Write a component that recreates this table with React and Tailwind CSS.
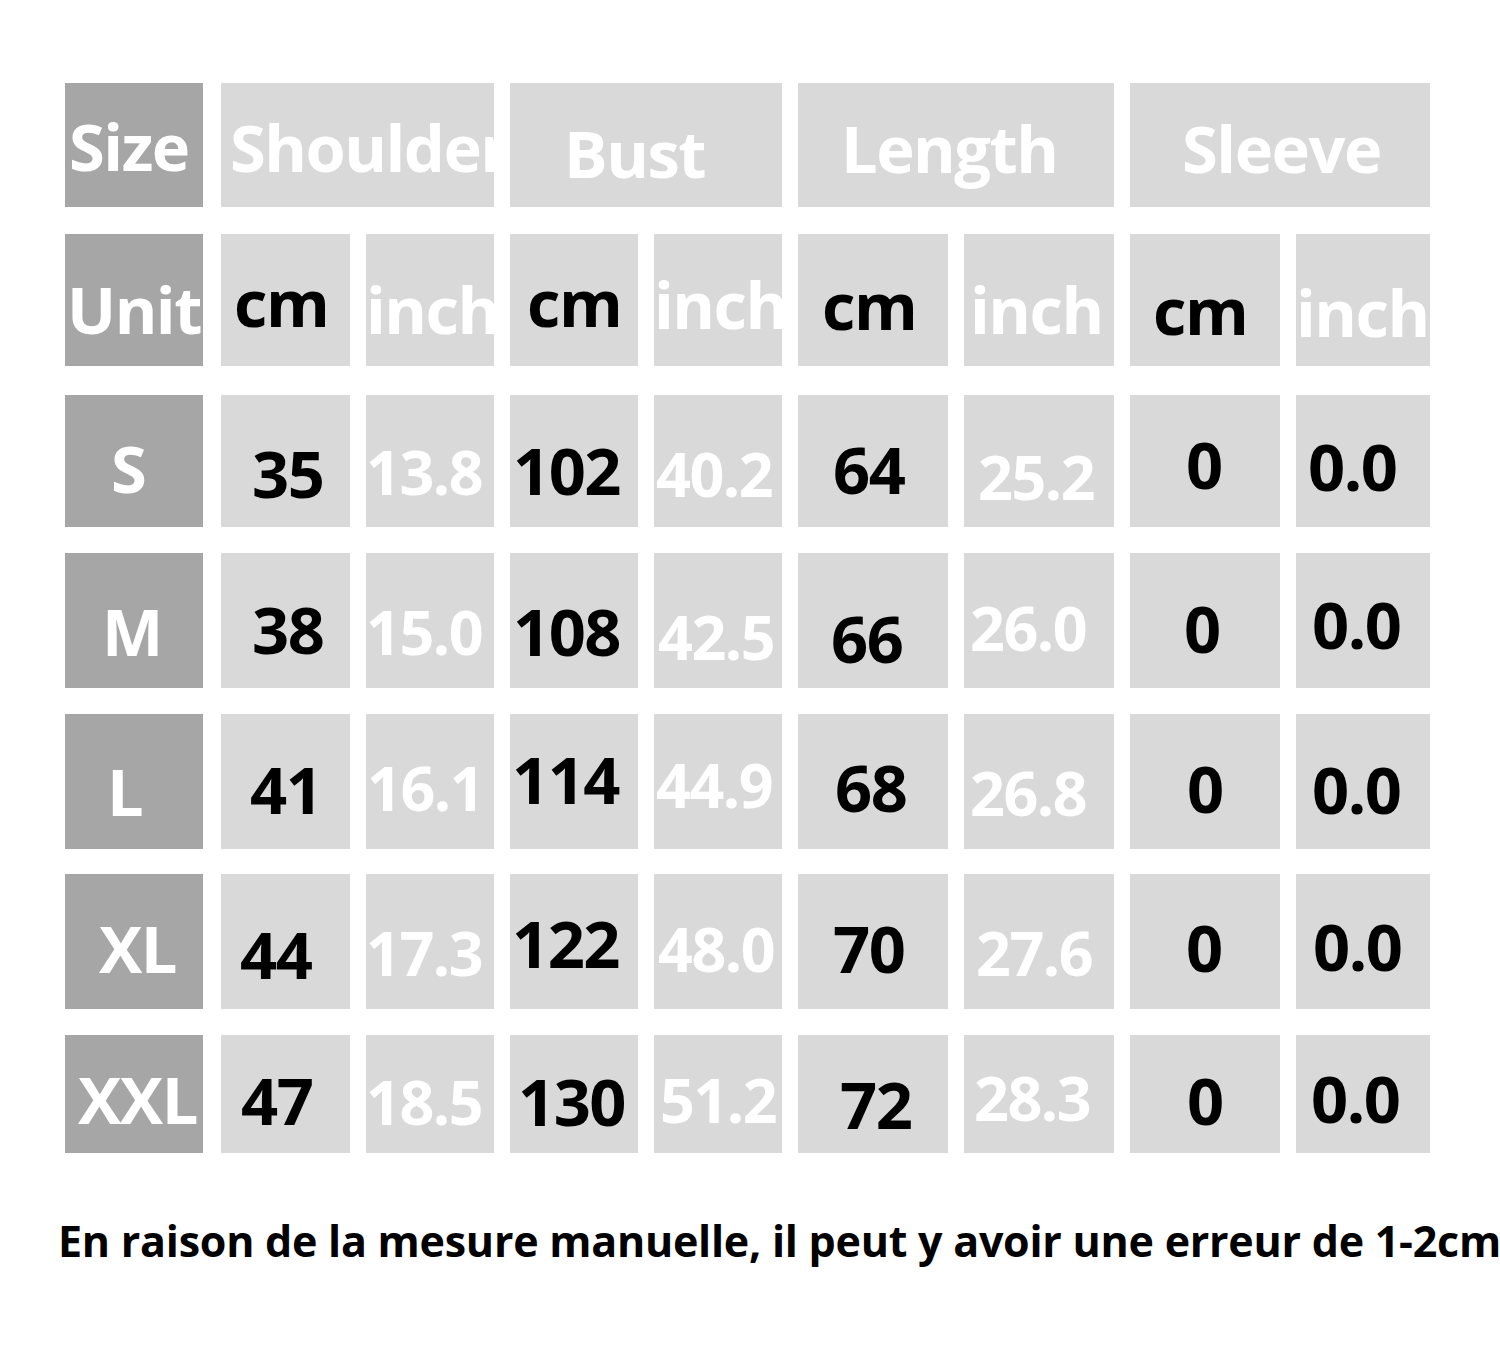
import React from 'react';

// column widths for the 9 narrow cells (size + 4 x cm/inch)
const widths = ['w-[138px] mr-[2px]', 'w-[129px]', 'w-[128px]', 'w-[128px]', 'w-[128px]', 'w-[150px]', 'w-[150px]', 'w-[150px]', 'w-[134px]'];

const unitRow = [
  ['Unit', 'pl-[2px] pt-[43px]'],
  ['cm', 'pl-[13px] pt-[36px]'],
  ['inch', 'pl-0 pt-[43px]'],
  ['cm', 'pl-[17px] pt-[36px]'],
  ['inch', 'pl-0 pt-[38px]'],
  ['cm', 'pl-[24px] pt-[39px]'],
  ['inch', 'pl-[6px] pt-[43px]'],
  ['cm', 'pl-[23px] pt-[44px]'],
  ['inch', 'pl-0 pt-[46px]'],
];

const rows = [
  {
    box: 'h-[132px] mt-[29px]',
    cells: [
      ['S', 'pl-[46px] pt-[41px]'],
      ['35', 'pl-[31px] pt-[46px]'],
      ['13.8', 'pl-0 pt-[46px]'],
      ['102', 'pl-[3px] pt-[43px]'],
      ['40.2', 'pl-[2px] pt-[48px]'],
      ['64', 'pl-[35px] pt-[42px]'],
      ['25.2', 'pl-[14px] pt-[51px]'],
      ['0', 'pl-[56px] pt-[37px]'],
      ['0.0', 'pl-[12px] pt-[39px]'],
    ],
  },
  {
    box: 'h-[135px] mt-[26px]',
    cells: [
      ['M', 'pl-[37px] pt-[46px]'],
      ['38', 'pl-[31px] pt-[44px]'],
      ['15.0', 'pl-0 pt-[48px]'],
      ['108', 'pl-[3px] pt-[46px]'],
      ['42.5', 'pl-[4px] pt-[53px]'],
      ['66', 'pl-[33px] pt-[53px]'],
      ['26.0', 'pl-[6px] pt-[44px]'],
      ['0', 'pl-[54px] pt-[43px]'],
      ['0.0', 'pl-[16px] pt-[39px]'],
    ],
  },
  {
    box: 'h-[135px] mt-[26px]',
    cells: [
      ['L', 'pl-[42px] pt-[45px]'],
      ['41', 'pl-[29px] pt-[43px]'],
      ['16.1', 'pl-[1px] pt-[43px]'],
      ['114', 'pl-[2px] pt-[33px]'],
      ['44.9', 'pl-[2px] pt-[40px]'],
      ['68', 'pl-[37px] pt-[41px]'],
      ['26.8', 'pl-[6px] pt-[48px]'],
      ['0', 'pl-[57px] pt-[42px]'],
      ['0.0', 'pl-[16px] pt-[43px]'],
    ],
  },
  {
    box: 'h-[135px] mt-[25px]',
    cells: [
      ['XL', 'pl-[34px] pt-[42px]'],
      ['44', 'pl-[19px] pt-[48px]'],
      ['17.3', 'pl-0 pt-[48px]'],
      ['122', 'pl-[2px] pt-[37px]'],
      ['48.0', 'pl-[4px] pt-[44px]'],
      ['70', 'pl-[35px] pt-[42px]'],
      ['27.6', 'pl-[12px] pt-[48px]'],
      ['0', 'pl-[56px] pt-[41px]'],
      ['0.0', 'pl-[17px] pt-[40px]'],
    ],
  },
  {
    box: 'h-[118px] mt-[26px]',
    cells: [
      ['XXL', 'pl-[13px] pt-[32px]'],
      ['47', 'pl-[20px] pt-[33px]'],
      ['18.5', 'pl-0 pt-[36px]'],
      ['130', 'pl-[8px] pt-[34px]'],
      ['51.2', 'pl-[6px] pt-[34px]'],
      ['72', 'pl-[42px] pt-[37px]'],
      ['28.3', 'pl-[10px] pt-[32px]'],
      ['0', 'pl-[57px] pt-[33px]'],
      ['0.0', 'pl-[15px] pt-[31px]'],
    ],
  },
];

function Cell({ text, pad, width, kind, unit }) {
  // size column dark, cm black, inch white; the sleeve inch values are black
  let tone = 'bg-[#d9d9d9] text-black text-[65px]';
  if (kind === 0) tone = 'bg-[#a6a6a6] text-white text-[65px]';
  else if (unit && kind % 2 === 0) tone = 'bg-[#d9d9d9] text-white text-[65px]';
  else if (kind === 8) tone = 'bg-[#d9d9d9] text-black text-[65px]';
  else if (kind % 2 === 0) tone = 'bg-[#d9d9d9] text-white text-[61px]';
  return (
    <div className={`${width} ${tone} ${pad} h-full overflow-hidden whitespace-nowrap leading-none font-bold tracking-[-1.5px]`}>
      {text}
    </div>
  );
}

export default function App() {
  return (
    <div className="w-[1500px] h-[1349px] bg-white font-['Open_Sans',sans-serif]">
      <div className="pl-[65px] pt-[83px] flex flex-col">
        {/* header */}
        <div className="flex gap-4 h-[124px] leading-none font-bold text-white text-[65px] tracking-[-1.5px]">
          <div className="w-[138px] mr-[2px] bg-[#a6a6a6] pl-[4px] pt-[31px]">Size</div>
          <div className="w-[273px] bg-[#d9d9d9] pl-[9px] pt-[32px] overflow-hidden whitespace-nowrap">Shoulder</div>
          <div className="w-[272px] bg-[#d9d9d9] pl-[54px] pt-[38px]">Bust</div>
          <div className="w-[316px] bg-[#d9d9d9] pl-[43px] pt-[33px]">Length</div>
          <div className="w-[300px] bg-[#d9d9d9] pl-[52px] pt-[33px]">Sleeve</div>
        </div>

        {/* units */}
        <div className="flex gap-4 h-[132px] mt-[27px]">
          {unitRow.map(([t, p], i) => (
            <Cell key={i} text={t} pad={p} width={widths[i]} kind={i} unit />
          ))}
        </div>

        {rows.map((row, r) => (
          <div key={r} className={`flex gap-4 ${row.box}`}>
            {row.cells.map(([t, p], i) => (
              <Cell key={i} text={t} pad={p} width={widths[i]} kind={i} />
            ))}
          </div>
        ))}
      </div>

      <p className="mt-[66px] pl-[58px] text-[43px] leading-none font-bold text-black whitespace-nowrap tracking-[-0.25px]">
        En raison de la mesure manuelle, il peut y avoir une erreur de 1-2cm
      </p>
    </div>
  );
}
